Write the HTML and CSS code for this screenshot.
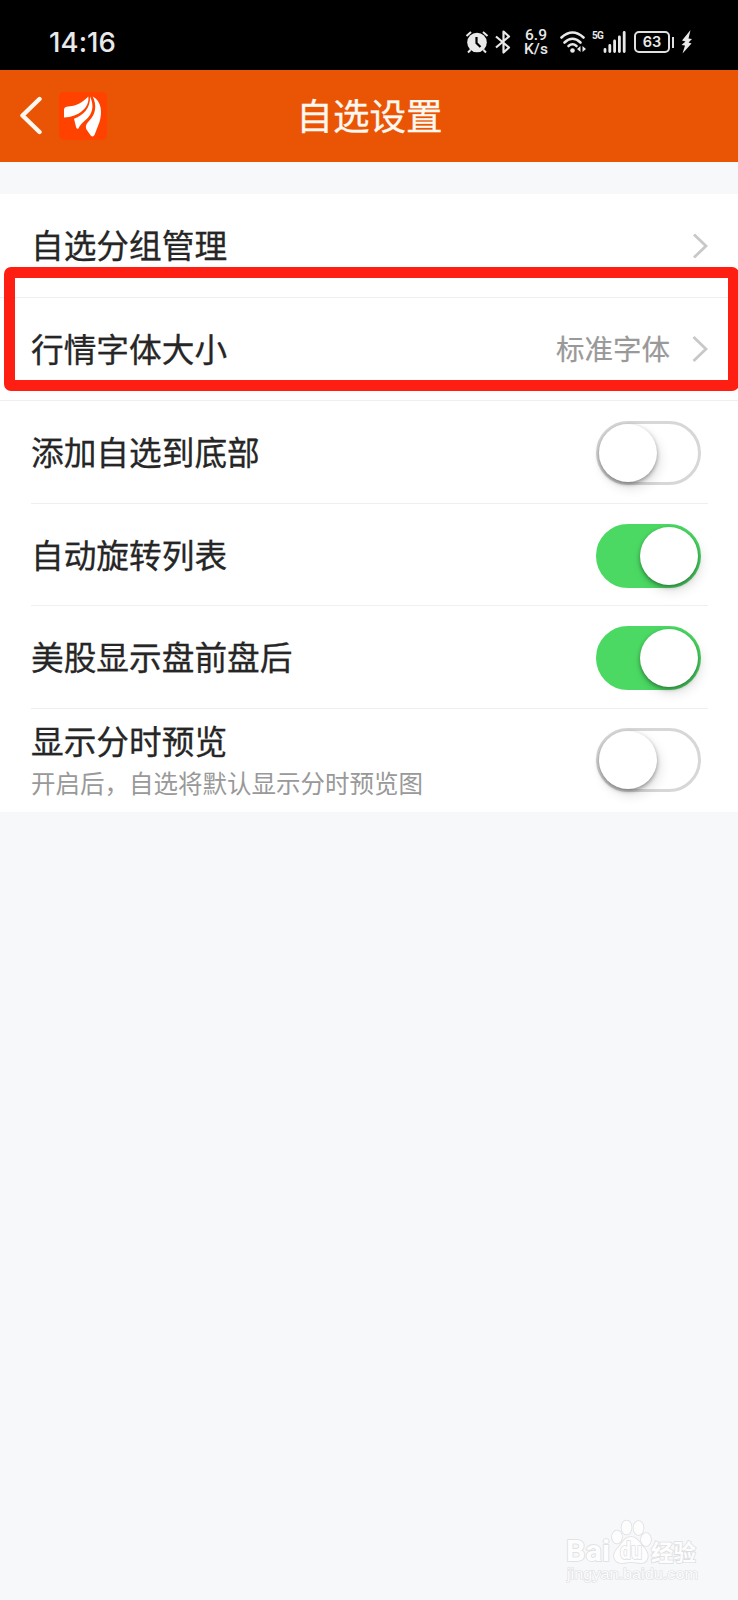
FILE: index.html
```
<!DOCTYPE html>
<html lang="zh-CN">
<head>
<meta charset="utf-8">
<title>自选设置</title>
<link rel="stylesheet" href="styles.css">
</head>
<body>
<div class="screen">
  <div class="status">
    <span class="clock">14:16</span>
    <div class="status-icons">
      <svg class="alarm" width="24" height="24" viewBox="0 0 24 24"><circle cx="12" cy="12.5" r="9.8" fill="#e9e9e9"/><path d="M1.5 6 6 2M22.500 6 18 2M5.500 20 3 22.500M18.500 20 21 22.500" stroke="#e9e9e9" stroke-width="2" fill="none"/><path d="M11.500 7v6l4 4" stroke="#000" stroke-width="2.200" fill="none"/></svg>
      <svg class="bluetooth" width="16" height="24" viewBox="0 0 16 24"><path d="M1 6.500 14 17.500 8.500 22.500V1.500L14 6.500 1 17.500" stroke="#e9e9e9" stroke-width="2.200" fill="none" stroke-linejoin="round"/></svg>
      <div class="speed"><span>6.9</span><span>K/s</span></div>
      <svg class="wifi" width="27" height="24" viewBox="0 0 27 24"><g fill="none" stroke="#e9e9e9" stroke-width="2.600" stroke-linecap="round"><path d="M1.500 7.500Q12.500-2.500 23.500 7.500"/><path d="M4.500 12.500Q12.500 5 20.500 12.500"/><path d="M8.500 16Q12.500 12.500 16.500 16"/></g><circle cx="12.500" cy="20.500" r="2.300" fill="#e9e9e9"/><path d="M20.500 16v6l-3.500-3zM22.500 16v6l3.500-3z" fill="#e9e9e9"/></svg>
      <div class="signal"><span class="net">5G</span><svg width="24" height="22" viewBox="0 0 24 22"><path d="M2 18.500v2M6.800 14.500v6M11.600 10v10.500M16.400 6v14.500M21.200 1.500v19" stroke="#e9e9e9" stroke-width="2.800" stroke-linecap="round"/></svg></div>
      <div class="battery">63</div><i class="battery-tip"></i>
      <svg class="bolt" width="11" height="24" viewBox="0 0 11 24"><path d="M9.500 0 1 10.500 4.500 11.500 .5 15 4 15.500 1.500 23.500 10.500 13.500 7.500 12.500 11 9 7.500 8.500z" fill="#e9e9e9"/></svg>
    </div>
  </div>
  <header class="header">
    <svg class="back" width="24" height="40" viewBox="0 0 24 40"><path d="M20.500 4 3.500 20.500 20.500 37" fill="none" stroke="#fff8f0" stroke-width="4.400" stroke-linecap="round" stroke-linejoin="round"/></svg>
    <svg class="logo" width="48" height="48" viewBox="0 0 48 48"><rect width="48" height="48" rx="5" fill="#ff4200"/><g fill="#fff"><path d="M29.300 4.500C31 15 20 25 5 25.500V17.500Q5 15.300 7.500 14.800C18 14 24 10 29.300 4.500Z"/><path d="M31 4.500C34.500 12 34.500 19 29.500 25C26 29 22 31 19.500 36.500Q18 37.500 17.200 35.500L15 26.800C25 23 31.500 16 31 4.500Z"/><path d="M33.700 4.500C42.500 9 43.500 20 40.500 30L35.500 43Q34 45.500 31.700 43.500L27.500 37.500C26 34 27.500 32 30 29C37 22 38 13 33.700 4.500Z"/></g></svg>
    <h1 class="title">自选设置</h1>
  </header>
  <main class="list">
    <div class="row full"><span class="label">自选分组管理</span><svg class="chevron" width="16" height="28" viewBox="0 0 16 28"><path d="M2 2.500 14 14 2 25.500" fill="none" stroke="#c8c8c8" stroke-width="2.800"/></svg></div>
    <div class="row full"><span class="label">行情字体大小</span><span class="value">标准字体</span><svg class="chevron" width="16" height="28" viewBox="0 0 16 28"><path d="M1.500 2 14 14 1.500 26" fill="none" stroke="#c8c8c8" stroke-width="2.800"/></svg><div class="highlight"></div></div>
    <div class="row"><span class="label">添加自选到底部</span><span class="toggle"><i class="knob"></i></span></div>
    <div class="row"><span class="label">自动旋转列表</span><span class="toggle on"><i class="knob"></i></span></div>
    <div class="row"><span class="label">美股显示盘前盘后</span><span class="toggle on"><i class="knob"></i></span></div>
    <div class="row last"><div class="stack"><span class="label">显示分时预览</span><span class="hint">开启后，自选将默认显示分时预览图</span></div><span class="toggle"><i class="knob"></i></span></div>
  </main>
  <div class="watermark">
    <svg width="140" height="68" viewBox="0 0 140 68"><g class="wm-mark"><text class="wm-latin" x="0" y="42" textLength="44" lengthAdjust="spacingAndGlyphs">Bai</text><ellipse cx="51" cy="18" rx="5" ry="6.500"/><ellipse cx="60.500" cy="8.500" rx="5" ry="7"/><ellipse cx="72.500" cy="9" rx="5" ry="7"/><ellipse cx="80" cy="20.500" rx="5" ry="6.500"/><path d="M65 18C58 18 56 25 51 30C45 37 49 44 56 44C60 44 62 43 65 43S71 44 75 44C82 44 84 36 79 30C74 25 72 18 65 18Z"/><text class="wm-du" x="54" y="40" textLength="22" lengthAdjust="spacingAndGlyphs">du</text><text class="wm-cjk" x="85" y="42">经验</text></g><text class="wm-url" x="1" y="60" textLength="131" lengthAdjust="spacingAndGlyphs">jingyan.baidu.com</text></svg>
  </div>
</div>
</body>
</html>
```
FILE: styles.css
```
* { box-sizing: border-box; }
body {
  margin: 0;
  background: #f6f8fa;
  color: #262626;
  font-family: "Noto Sans CJK SC", sans-serif;
}
.screen {
  position: relative;
  width: 738px;
  height: 1600px;
  overflow: hidden;
}
.status {
  display: flex;
  justify-content: space-between;
  height: 70px;
  padding: 14px 46px 0 49px;
  background: #000;
  color: #e9e9e9;
}
.clock {
  font: 500 27.5px/56px Inter, sans-serif;
  letter-spacing: 0.1px;
}
.status-icons {
  display: flex;
  align-items: center;
  height: 56px;
}
.bluetooth { margin-left: 6px; }
.speed {
  display: flex;
  flex-direction: column;
  align-items: center;
  width: 26px;
  margin-left: 12px;
  font: 500 15.500px/14.500px Roboto, sans-serif;
}
.wifi { margin-left: 11px; }
.signal {
  display: flex;
  align-items: flex-end;
  margin-left: 5px;
}
.net {
  align-self: flex-start;
  width: 11px;
  font: 700 10px/10px Roboto, sans-serif;
  letter-spacing: -0.7px;
}
.battery {
  width: 36px;
  height: 22px;
  margin-left: 7px;
  border: 2px solid #e0e0e0;
  border-radius: 5px;
  font: 600 14.5px/18px Inter, sans-serif;
  text-align: center;
}
.battery-tip {
  width: 2px;
  height: 11px;
  margin-left: 2px;
  background: #e0e0e0;
}
.bolt { margin-left: 7px; }
.header {
  display: grid;
  grid-template-columns: 24px 48px 1fr;
  align-items: center;
  height: 92px;
  padding: 0 110px 0 19px;
  background: #e95505;
}
.back { margin-bottom: 2px; }
.logo { margin-left: 16px; }
.title {
  margin: 0 0 3px;
  padding-left: 20px;
  text-align: center;
  color: #fff8f0;
  font-size: 36.6px;
  font-weight: 400;
  line-height: 54px;
  -webkit-text-stroke: 0.3px;
}
.list {
  margin-top: 32px;
  background: #fff;
}
.row {
  position: relative;
  display: flex;
  align-items: center;
  height: 102.700px;
  margin-left: 31px;
  margin-right: 30px;
  border-bottom: 1px solid #efefef;
}
.row.full {
  height: 103.500px;
  margin: 0;
  padding: 0 30px 0 31px;
}
.row.last { border-bottom: 0; }
.label {
  flex: 1;
  padding-bottom: 2px;
  font-size: 32.7px;
  line-height: 44px;
  -webkit-text-stroke: 0.3px;
}
.value {
  margin-right: 22px;
  padding-bottom: 1px;
  color: #999;
  font-size: 28.5px;
  line-height: 40px;
  -webkit-text-stroke: 0.2px;
}
.chevron { margin-top: 1px; }
.stack {
  display: flex;
  flex: 1;
  flex-direction: column;
}
.stack .label { flex: none; }
.hint {
  color: #999;
  font-size: 24.5px;
  line-height: 38px;
}
.toggle {
  display: flex;
  width: 105px;
  height: 64px;
  margin: 2px 7px 0 0;
  border: 3px solid #d7d7d7;
  border-radius: 32px;
  background: #fff;
}
.last .toggle { margin-top: 0; }
.toggle.on {
  justify-content: flex-end;
  border-color: #4bd963;
  background: #4bd963;
}
.knob {
  width: 58px;
  height: 58px;
  border-radius: 50%;
  background: #fff;
  box-shadow: 0 2px 4px rgba(0, 0, 0, .38), 3px 6px 12px rgba(0, 0, 0, .12);
}
.highlight {
  position: absolute;
  left: 4px;
  top: -31px;
  width: 735px;
  height: 124px;
  border: 11.5px solid #ff1e12;
  border-radius: 7px;
}
.watermark {
  position: absolute;
  left: 566px;
  top: 1519px;
}
.watermark svg { display: block; }
.wm-mark {
  fill: #fdfdfe;
  stroke: #dedfe1;
  stroke-width: 1.600px;
  paint-order: stroke;
}
.wm-latin { font: 700 29px Roboto, sans-serif; }
.wm-du { font: 700 23px Roboto, sans-serif; }
.wm-cjk { font: 700 22.500px "Noto Sans CJK SC", sans-serif; }
.wm-url {
  fill: #fcfcfd;
  stroke: #dedfe1;
  stroke-width: 1.200px;
  paint-order: stroke;
  font: 15px "Liberation Sans", sans-serif;
}
```
